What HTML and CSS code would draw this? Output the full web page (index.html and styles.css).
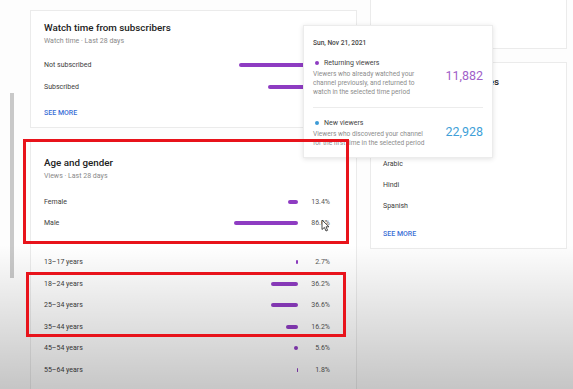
FILE: index.html
```html
<!DOCTYPE html>
<html lang="en">
<head>
    <meta charset="UTF-8">
    <meta name="viewport" content="width=device-width, initial-scale=1.0">
    <title>Audience</title>
    <link rel="stylesheet" href="styles.css">
</head>
<body>
    <div class="page">
        <div class="gutter">
            <div class="thumb"></div>
        </div>

        <div class="col-left">
            <div class="card card-watch">
                <h2>Watch time from subscribers</h2>
                <p class="sub">Watch time · Last 28 days</p>
                <div class="rows">
                    <div class="row">
                        <span class="label">Not subscribed</span>
                        <span class="track wide"><span class="bar" style="width: 91px"></span></span>
                    </div>
                    <div class="row">
                        <span class="label">Subscribed</span>
                        <span class="track wide"><span class="bar" style="width: 62px"></span></span>
                    </div>
                </div>
                <a class="more" href="#">SEE MORE</a>
            </div>

            <div class="card card-age">
                <h2>Age and gender</h2>
                <p class="sub">Views · Last 28 days</p>
                <div class="rows gender">
                    <div class="row">
                        <span class="label">Female</span>
                        <span class="track"><span class="bar" style="width: 9.9px"></span></span>
                        <span class="value">13.4%</span>
                    </div>
                    <div class="row">
                        <span class="label">Male</span>
                        <span class="track"><span class="bar" style="width: 64.1px"></span></span>
                        <span class="value">86.6%</span>
                    </div>
                </div>
                <div class="rows ages">
                    <div class="row">
                        <span class="label">13–17 years</span>
                        <span class="track"><span class="bar" style="width: 2px"></span></span>
                        <span class="value">2.7%</span>
                    </div>
                    <div class="row">
                        <span class="label">18–24 years</span>
                        <span class="track"><span class="bar" style="width: 26.8px"></span></span>
                        <span class="value">36.2%</span>
                    </div>
                    <div class="row">
                        <span class="label">25–34 years</span>
                        <span class="track"><span class="bar" style="width: 27.1px"></span></span>
                        <span class="value">36.6%</span>
                    </div>
                    <div class="row">
                        <span class="label">35–44 years</span>
                        <span class="track"><span class="bar" style="width: 12px"></span></span>
                        <span class="value">16.2%</span>
                    </div>
                    <div class="row">
                        <span class="label">45–54 years</span>
                        <span class="track"><span class="bar" style="width: 4.1px"></span></span>
                        <span class="value">5.6%</span>
                    </div>
                    <div class="row">
                        <span class="label">55–64 years</span>
                        <span class="track"><span class="bar" style="width: 1.5px"></span></span>
                        <span class="value">1.8%</span>
                    </div>
                </div>
            </div>
        </div>

        <div class="col-right">
            <div class="card card-top"></div>
            <div class="card card-lang">
                <h2>Top subtitle/CC languages</h2>
                <p class="sub">Views · Last 28 days</p>
                <div class="rows">
                    <div class="row"><span class="label">English</span></div>
                    <div class="row"><span class="label">Russian</span></div>
                    <div class="row"><span class="label">Arabic</span></div>
                    <div class="row"><span class="label">Hindi</span></div>
                    <div class="row"><span class="label">Spanish</span></div>
                </div>
                <a class="more" href="#">SEE MORE</a>
            </div>
        </div>

        <div class="tooltip">
            <div class="tip-date">Sun, Nov 21, 2021</div>
            <div class="tip-item tip-first">
                <div class="tip-text">
                    <div class="tip-label"><span class="dot dot-purple"></span>Returning viewers</div>
                    <p>Viewers who already watched your channel previously, and returned to watch in the selected time period</p>
                </div>
                <div class="tip-num num-purple">11,882</div>
            </div>
            <div class="tip-item">
                <div class="tip-text">
                    <div class="tip-label"><span class="dot dot-blue"></span>New viewers</div>
                    <p>Viewers who discovered your channel for the first time in the selected period</p>
                </div>
                <div class="tip-num num-blue">22,928</div>
            </div>
        </div>

        <div class="shade"></div>
        <div class="mark mark-gender"></div>
        <div class="mark mark-age"></div>

        <svg class="cursor" width="9" height="13" viewBox="0 0 9 13">
            <path d="M1 1 L1 10.5 L3.4 8.4 L5 12 L6.6 11.3 L5 7.8 L8 7.8 Z" fill="#fff" stroke="#333" stroke-width="0.9" stroke-linejoin="round"/>
        </svg>
    </div>
</body>
</html>
```

FILE: styles.css
```css
body {
    margin: 0;
    padding: 0;
    font-family: Roboto, "Liberation Sans", Arial, sans-serif;
    background-color: #fff;
}
.page {
    position: relative;
    width: 573px;
    height: 389px;
    overflow: hidden;
    display: flex;
    align-items: flex-start;
    background-color: #fdfdfd;
}
.gutter {
    width: 30px;
    flex-shrink: 0;
}
.thumb {
    margin: 93px 0 0 10px;
    width: 4px;
    height: 185px;
    background-color: #c9c9c9;
}
.col-left {
    width: 327px;
    flex-shrink: 0;
}
.col-right {
    width: 197px;
    margin-left: 13px;
    flex-shrink: 0;
}
.card {
    background-color: #fff;
    border: 1px solid #ebebeb;
    box-sizing: border-box;
}
.card h2 {
    margin: 0;
    font-size: 9.8px;
    line-height: 14px;
    font-weight: 500;
    color: #222;
}
.card .sub {
    margin: 1px 0 0;
    font-size: 7px;
    line-height: 10px;
    color: #8a8a8a;
}
.row {
    display: flex;
    align-items: center;
    font-size: 7px;
    color: #3c3c3c;
}
.label {
    flex: 1;
}
.track {
    width: 74px;
    display: flex;
    justify-content: flex-end;
}
.track.wide {
    width: 106px;
}
.bar {
    height: 4px;
    border-radius: 2px;
    background-color: #8e3cc2;
}
.value {
    width: 32px;
    text-align: right;
    color: #555;
}
.more {
    display: block;
    font-size: 7px;
    line-height: 10px;
    font-weight: 500;
    color: #3b6fd6;
    text-decoration: none;
}

.card-watch {
    margin-top: 10px;
    padding: 10px 26px 9px 13px;
}
.card-watch .rows {
    margin-top: 8px;
}
.card-watch .row {
    height: 22px;
}
.card-watch .more {
    margin-top: 10px;
}

.card-age {
    margin-top: 12px;
    padding: 15px 26px 60px 13px;
}
.card-age .row {
    height: 21.6px;
}
.gender {
    margin-top: 10px;
}
.ages {
    margin-top: 17px;
}

.card-top {
    height: 49px;
    border-top: none;
}
.card-lang {
    margin-top: 13px;
    padding: 12px 12px 9px 12px;
}
.card-lang .rows {
    margin-top: 11px;
}
.card-lang .row {
    height: 21px;
}
.card-lang .more {
    margin-top: 12.5px;
}

.tooltip {
    position: absolute;
    left: 303px;
    top: 25px;
    width: 190px;
    height: 133px;
    box-sizing: border-box;
    padding: 12px 9px 0 9px;
    background-color: #fff;
    border: 1px solid #ececec;
    box-shadow: 0 1px 5px rgba(0, 0, 0, 0.12);
}
.tip-date {
    font-size: 6.6px;
    line-height: 10px;
    font-weight: 500;
    color: #444;
}
.tip-item {
    display: flex;
    align-items: center;
    justify-content: space-between;
    padding: 10px 0;
}
.tip-first {
    border-bottom: 1px solid #ececec;
}
.tip-text {
    width: 116px;
}
.tip-label {
    display: flex;
    align-items: center;
    font-size: 7px;
    line-height: 10px;
    color: #444;
}
.dot {
    width: 4px;
    height: 4px;
    border-radius: 50%;
    margin: 0 5px 0 2px;
}
.dot-purple {
    background-color: #8e3cc2;
}
.dot-blue {
    background-color: #3d9bd6;
}
.tip-text p {
    margin: 2px 0 0;
    font-size: 6.6px;
    line-height: 9px;
    color: #8c8c8c;
}
.tip-num {
    font-size: 12.5px;
    margin-bottom: 4px;
}
.tip-first .tip-num {
    margin-bottom: 5px;
}
.num-purple {
    color: #a15fc9;
}
.num-blue {
    color: #3f9fd8;
}

.shade {
    position: absolute;
    left: 0;
    top: 245px;
    width: 100%;
    height: 144px;
    background: linear-gradient(to bottom, rgba(0, 0, 0, 0), rgba(0, 0, 0, 0.22));
    pointer-events: none;
}
.mark {
    position: absolute;
    border: 3px solid #e8131b;
    box-sizing: border-box;
    pointer-events: none;
}
.mark-gender {
    left: 23px;
    top: 139px;
    width: 326px;
    height: 105px;
}
.mark-age {
    left: 26px;
    top: 272px;
    width: 320px;
    height: 65px;
}
.cursor {
    position: absolute;
    left: 321px;
    top: 219px;
}
```
